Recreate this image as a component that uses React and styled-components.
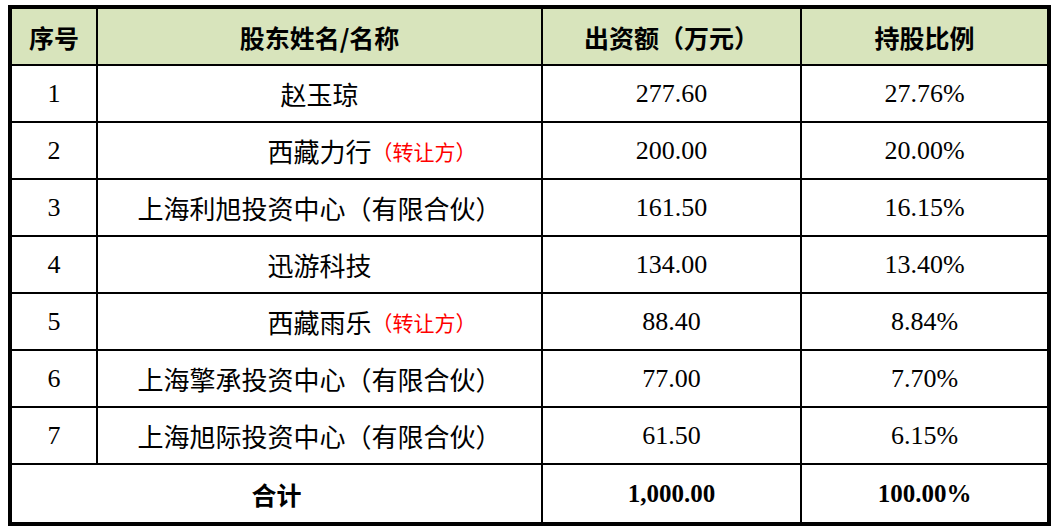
import React from 'react'
import styled, { createGlobalStyle } from 'styled-components'

const GlobalStyle = createGlobalStyle`
  html, body {
    margin: 0;
    padding: 0;
    background: #ffffff;
  }
  * {
    box-sizing: border-box;
  }
`;

const rows = [
  { no: '1', name: '赵玉琼', amount: '277.60', ratio: '27.76%' },
  { no: '2', name: '西藏力行', note: '（转让方）', amount: '200.00', ratio: '20.00%' },
  { no: '3', name: '上海利旭投资中心（有限合伙）', amount: '161.50', ratio: '16.15%' },
  { no: '4', name: '迅游科技', amount: '134.00', ratio: '13.40%' },
  { no: '5', name: '西藏雨乐', note: '（转让方）', amount: '88.40', ratio: '8.84%' },
  { no: '6', name: '上海擎承投资中心（有限合伙）', amount: '77.00', ratio: '7.70%' },
  { no: '7', name: '上海旭际投资中心（有限合伙）', amount: '61.50', ratio: '6.15%' },
];

const App = () => {
  return (
    <>
      <GlobalStyle />
      <Page>
        <Table>
          <colgroup>
            <col style={{ width: 86 }} />
            <col style={{ width: 445 }} />
            <col style={{ width: 259 }} />
            <col style={{ width: 245 }} />
          </colgroup>
          <thead>
            <Row>
              <HeadCell>序号</HeadCell>
              <HeadCell>股东姓名/名称</HeadCell>
              <HeadCell>出资额（万元）</HeadCell>
              <HeadCell>持股比例</HeadCell>
            </Row>
          </thead>
          <tbody>
            {rows.map((r) => (
              <Row key={r.no}>
                <Cell>{r.no}</Cell>
                <Cell>
                  <Name>
                    {r.name}
                    {r.note && <Note>{r.note}</Note>}
                  </Name>
                </Cell>
                <Cell>{r.amount}</Cell>
                <Cell>{r.ratio}</Cell>
              </Row>
            ))}
            <Row $last>
              <Cell colSpan={2} $bold>合计</Cell>
              <Cell $bold>1,000.00</Cell>
              <Cell $bold>100.00%</Cell>
            </Row>
          </tbody>
        </Table>
      </Page>
    </>
  )
}

export default App;

const Page = styled.div`
  padding: 5px 0 0 8px;
`;

const Table = styled.table`
  width: 1043px;
  table-layout: fixed;
  border-collapse: separate;
  border-spacing: 0;
  border: 4px solid #000;
  font-family: "Liberation Serif", "Noto Sans CJK SC", serif;
  font-size: 26px;
  color: #000;
`;

const Row = styled.tr`
  height: 57px;

  & > * {
    border-bottom: ${({ $last }) => ($last ? 'none' : '2px solid #000')};
  }
  & > *:last-child {
    border-right: none;
  }
`;

const HeadCell = styled.th`
  background: #d8e4bc;
  border-right: 2px solid #000;
  padding: 0;
  text-align: center;
  vertical-align: middle;
  font-family: "Noto Sans CJK SC", sans-serif;
  font-weight: 700;
  font-size: 25px;
`;

const Cell = styled.td`
  border-right: 2px solid #000;
  padding: 0;
  text-align: center;
  vertical-align: middle;
  white-space: nowrap;
  font-weight: ${({ $bold }) => ($bold ? 700 : 400)};
  font-size: ${({ $bold }) => ($bold ? '25px' : '26px')};
`;

const Name = styled.span`
  position: relative;
  display: inline-block;
`;

const Note = styled.span`
  position: absolute;
  left: 100%;
  top: 50%;
  transform: translateY(-50%);
  white-space: nowrap;
  font-size: 21px;
  color: #ff0000;
`;
